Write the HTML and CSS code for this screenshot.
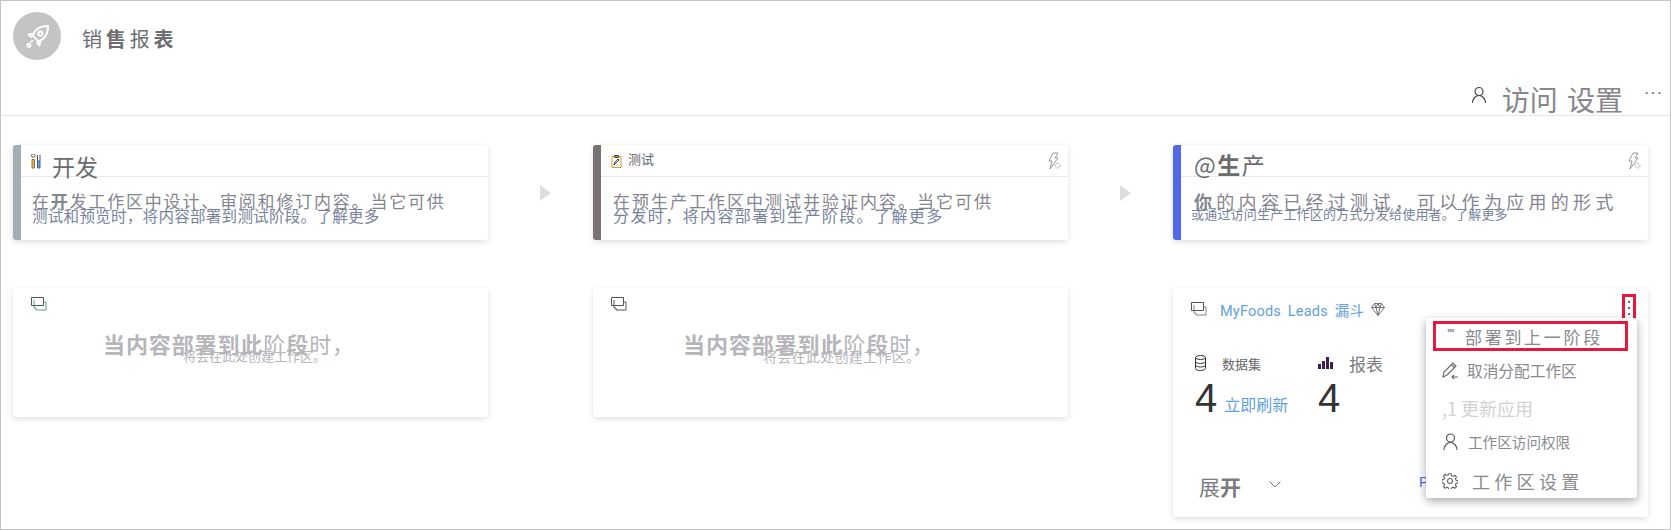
FILE: index.html
```html
<!DOCTYPE html>
<html lang="zh-CN">
<head>
    <meta charset="UTF-8">
    <title>销售报表</title>
    <link rel="stylesheet" href="styles.css">
</head>
<body>
    <div class="frame">
        <header class="top">
            <div class="brand">
                <div class="avatar">
                    <svg width="25" height="25" viewBox="0 0 26 26" fill="none" stroke="#fff" stroke-width="2">
                        <path d="M24 2c-6 0-11 2-14 6l-2 4 6 6 4-2c4-3 6-8 6-14z"/>
                        <circle cx="16" cy="10" r="2.200"/>
                        <path d="M8 10l-4 1 3 3M16 18l-1 4-3-3"/>
                        <circle cx="4" cy="22" r="1.600"/>
                        <path d="M8 17l-2 2"/>
                    </svg>
                </div>
                <h1 class="title">销<b>售</b>报<b>表</b></h1>
            </div>
            <div class="actions">
                <svg class="action-user" width="16" height="18" viewBox="0 0 16 18" fill="none" stroke="#444" stroke-width="1.200">
                    <circle cx="8" cy="5.500" r="4"/>
                    <path d="M1.500 17c0-4 3-7.500 6.500-7.500s6.500 3.500 6.500 7.500"/>
                </svg>
                <span class="action-text">访问 设置</span>
                <span class="action-more">···</span>
            </div>
        </header>

        <main class="pipeline">
            <section class="stage">
                <div class="stage-bar bar-dev"></div>
                <div class="stage-main">
                    <div class="stage-head">
                        <svg class="stage-icon" width="10" height="15" viewBox="0 0 10 15" fill="none" stroke="#555" stroke-width="1">
                            <path d="M1 5.500h2.500V14H1z" fill="#e8b060" stroke="#a07030"/>
                            <path d="M.5 1.500a1.700 1.700 0 1 0 3.500 0 1.700 1.700 0 1 0-3.500 0z"/>
                            <path d="M6.500 7h2.500v7H6.500z" fill="#58a0d8" stroke="#386890"/>
                            <path d="M6.500 1v6M9 1v6"/>
                        </svg>
                        <span class="head-big">开发</span>
                    </div>
                    <div class="stage-body">
                        <p class="line-main"><span class="ls-dev">在<b>开</b>发工作区中设计、审阅和修订内容。当它可供</span></p>
                        <p class="line-sub"><span class="ls-dev2">测试和预览时，将内容部署到测试阶段。了解更多</span></p>
                    </div>
                </div>
            </section>

            <div class="arrow"></div>

            <section class="stage">
                <div class="stage-bar bar-test"></div>
                <div class="stage-main">
                    <div class="stage-head">
                        <svg class="stage-icon" width="11" height="14" viewBox="0 0 11 14" fill="none" stroke="#444" stroke-width="1">
                            <path d="M1 2.500h9v11H1z" stroke="#d99a30"/>
                            <path d="M3.500 1.500h4v2h-4z"/>
                            <path d="M3 11l1-3 3-3 1 1-3 3z"/>
                        </svg>
                        <span class="head-small">测试</span>
                        <svg class="bolt" width="14" height="18" viewBox="0 0 14 18" fill="none" stroke="#999" stroke-width="1">
                            <path d="M6 1h5L8 6h3l-8 11 2-8H2z"/>
                            <circle cx="10.500" cy="13.500" r="2.500" stroke-dasharray="1.500 1"/>
                        </svg>
                    </div>
                    <div class="stage-body body-test">
                        <p class="line-main"><span class="ls-test">在预生产工作区中测试并验证内容。当它可供</span></p>
                        <p class="line-sub"><span class="ls-test2">分发时，将内容部署到生产阶段。了解更多</span></p>
                    </div>
                </div>
            </section>

            <div class="arrow"></div>

            <section class="stage">
                <div class="stage-bar bar-prod"></div>
                <div class="stage-main">
                    <div class="stage-head">
                        <span class="head-big head-at">@<b>生</b>产</span>
                        <svg class="bolt" width="14" height="18" viewBox="0 0 14 18" fill="none" stroke="#999" stroke-width="1">
                            <path d="M6 1h5L8 6h3l-8 11 2-8H2z"/>
                            <circle cx="10.500" cy="13.500" r="2.500" stroke-dasharray="1.500 1"/>
                        </svg>
                    </div>
                    <div class="stage-body body-prod">
                        <p class="line-main"><span class="ls-prod"><b>你</b>的内容已经过测试，可以作为应用的形式</span></p>
                        <p class="line-sub"><span class="ls-prod2">或通过访问生产工作区的方式分发给使用者。了解更多</span></p>
                    </div>
                </div>
            </section>

            <section class="empty col-one">
                <svg class="stack" width="16" height="14" viewBox="0 0 16 14" fill="none" stroke="#555" stroke-width="1">
                    <path d="M3 3v8h2v2h10V5h-2" stroke="#6a9a78"/>
                    <path d="M.5.500h12v8H.5z"/>
                </svg>
                <p class="empty-main"><b>当内容部署到此</b>阶<b>段</b>时，</p>
                <p class="empty-sub">将会在此处创建工作区。</p>
            </section>

            <section class="empty col-two">
                <svg class="stack" width="16" height="14" viewBox="0 0 16 14" fill="none" stroke="#555" stroke-width="1">
                    <path d="M3 3v8h2v2h10V5h-2"/>
                    <path d="M.5.500h12v8H.5z"/>
                </svg>
                <p class="empty-main"><b>当内容部署到此</b>阶<b>段</b>时，</p>
                <p class="empty-sub sub-two">将会在此处创建工作区。</p>
            </section>

            <section class="workspace col-three">
                <div class="ws-head">
                    <svg width="16" height="14" viewBox="0 0 16 14" fill="none" stroke="#555" stroke-width="1">
                        <path d="M3 3v8h2v2h10V5h-2" stroke="#8a7aa0"/>
                        <path d="M.5.500h12v8H.5z"/>
                    </svg>
                    <a class="ws-name">MyFoods Leads 漏斗</a>
                    <svg width="14" height="13" viewBox="0 0 14 13" fill="none" stroke="#777" stroke-width="1">
                        <path d="M3.500.500h7l3 4L7 12.500.5 4.500zM.5 4.500h13M5 4.500l2 8 2-8M3.500.500L5 4.500 7 .5l2 4 1.500-4"/>
                    </svg>
                    <div class="kebab"><i></i><i></i><i></i></div>
                </div>

                <div class="ws-stats">
                    <div class="stat-data">
                        <div class="stat-label">
                            <svg width="11" height="16" viewBox="0 0 11 16" fill="none" stroke="#333" stroke-width="1">
                                <ellipse cx="5.500" cy="2.500" rx="5" ry="2"/>
                                <path d="M.5 2.500v11c0 1 2 2 5 2s5-1 5-2v-11M.5 6.500c0 1 2 2 5 2s5-1 5-2M.5 10c0 1 2 2 5 2s5-1 5-2"/>
                            </svg>
                            <span class="label-small">数据集</span>
                        </div>
                        <div class="stat-value"><span class="num">4</span><a class="refresh">立即刷新</a></div>
                    </div>
                    <div>
                        <div class="stat-label">
                            <svg width="15" height="12" viewBox="0 0 15 12" fill="#3a2050">
                                <path d="M0 7h3v5H0zM4 4h3v8H4zM8 0h3v12H8zM12 5h3v7h-3z"/>
                            </svg>
                            <span class="label-big">报表</span>
                        </div>
                        <div class="stat-value"><span class="num">4</span></div>
                    </div>
                </div>

                <div class="ws-foot">
                    <span class="expand">展<b>开</b></span>
                    <svg width="12" height="7" viewBox="0 0 12 7" fill="none" stroke="#777" stroke-width="1"><path d="M.5.500L6 6l5.500-5.500"/></svg>
                    <span class="foot-link">P</span>
                </div>

                <div class="menu">
                    <div class="menu-item item-hit"><span class="hit-mark">''''</span><span class="hit-text">部署到上一阶段</span></div>
                    <div class="menu-item item-unassign">
                        <svg width="17" height="18" viewBox="0 0 17 18" fill="none" stroke="#666" stroke-width="1.100">
                            <path d="M1 16l1-5L11 2l3 3-9 9zM9.500 3.500l3 3"/>
                            <path d="M16 16h-6m2-2l-2 2 2 2"/>
                        </svg>
                        <span>取消分配工作区</span>
                    </div>
                    <div class="menu-item item-off">,1 更新应用</div>
                    <div class="menu-item item-access">
                        <svg width="15" height="17" viewBox="0 0 15 17" fill="none" stroke="#555" stroke-width="1.200">
                            <circle cx="7.500" cy="5" r="4"/>
                            <path d="M1 17c0-4 3-7.500 6.500-7.500S14 13 14 17"/>
                        </svg>
                        <span>工作区访问权限</span>
                    </div>
                    <div class="menu-item item-settings">
                        <svg width="16" height="16" viewBox="0 0 16 16" fill="none" stroke="#666" stroke-width="1.100">
                            <circle cx="8" cy="8" r="2.500"/>
                            <path d="M6.800.8h2.400l.4 2 1.500.6 1.700-1.100 1.700 1.700-1.100 1.700.6 1.500 2 .4v2.400l-2 .4-.6 1.500 1.100 1.700-1.700 1.700-1.700-1.100-1.500.6-.4 2H6.800l-.4-2-1.500-.6-1.700 1.100-1.700-1.700 1.100-1.700-.6-1.500-2-.4V6.600l2-.4.6-1.500L1.500 3l1.700-1.700 1.700 1.100 1.500-.6z"/>
                        </svg>
                        <span>工作区设置</span>
                    </div>
                </div>
            </section>
        </main>
    </div>
</body>
</html>
```

FILE: styles.css
```css
* { box-sizing: border-box; }
body {
    margin: 0;
    background: white;
    font-family: "Noto Sans CJK SC", "Liberation Sans", sans-serif;
    color: #77777c;
}
p, h1 { margin: 0; font-weight: normal; }
b { font-weight: bold; }
.frame {
    width: 1671px;
    height: 530px;
    overflow: hidden;
    border: 1px solid #c4c4c4;
}

/* header */
.top {
    height: 115px;
    border-bottom: 1px solid #e6e6e6;
    padding: 11px 7px 0 12px;
    display: flex;
    justify-content: space-between;
}
.brand { display: flex; align-items: flex-start; gap: 21px; }
.avatar {
    width: 48px;
    height: 48px;
    border-radius: 50%;
    background: #c4c4c4;
    display: flex;
    align-items: center;
    justify-content: center;
}
.title {
    font-size: 20px;
    letter-spacing: 3.800px;
    line-height: 28px;
    margin-top: 13px;
    color: #6e6e72;
}
.actions {
    display: flex;
    align-items: center;
    align-self: flex-end;
    height: 28px;
    margin-bottom: 2px;
}
.action-user { margin-top: -8px; }
.action-text {
    font-size: 28px;
    line-height: 28px;
    margin-left: 15px;
    word-spacing: 3px;
    color: #86868b;
}
.action-more {
    font-size: 16px;
    font-family: "Liberation Sans", sans-serif;
    margin-left: 21px;
    margin-top: -12px;
    color: #4a5a80;
    letter-spacing: 1px;
}

/* stages */
.pipeline {
    display: grid;
    grid-template-columns: 475px 105px 475px 105px 475px;
    grid-template-rows: 95px auto;
    row-gap: 48px;
    padding: 29px 0 0 12px;
    align-items: start;
}
.stage, .empty, .workspace {
    background: white;
    border-radius: 3px;
    box-shadow: 0 2px 6px rgba(0,0,0,0.13);
}
.stage { display: flex; height: 95px; overflow: hidden; }
.stage-bar { width: 8px; flex: none; }
.bar-dev { background: #a0b0b2; }
.bar-test { background: #7a7272; }
.bar-prod { background: #5068e8; }
.stage-main { flex: 1; }
.stage-head {
    height: 32px;
    border-bottom: 1px solid #e8e8e8;
    display: flex;
    align-items: flex-start;
    padding-left: 10px;
}
.stage-icon { margin-top: 9px; }
.head-big {
    font-size: 23px;
    line-height: 42px;
    margin-left: 11px;
    color: #6c6c70;
}
.head-at { margin-left: 3px; letter-spacing: 1.500px; line-height: 38px; }
.head-small {
    font-size: 13px;
    line-height: 28px;
    margin-left: 6px;
    color: #66666a;
}
.bolt { margin-left: auto; margin-right: 7px; margin-top: 7px; }
.stage-body { padding: 14px 0 0 11px; }
.line-main, .line-sub { white-space: nowrap; }
.line-main { font-size: 17px; line-height: 20px; color: #85858f; }
.line-sub { font-size: 15.500px; line-height: 16px; color: #78829c; margin-top: -4px; }
.ls-dev { letter-spacing: 1.800px; }
.ls-dev2 { letter-spacing: 0.300px; }
.body-test { padding-left: 12px; }
.ls-test { letter-spacing: 2px; }
.ls-test2 { font-size: 16px; letter-spacing: 1.400px; }
.body-prod { padding: 14px 0 0 13px; }
.body-prod .line-sub { margin-top: -8px; }
.ls-prod { font-size: 18px; letter-spacing: 4.300px; }
.ls-prod2 { font-size: 13px; letter-spacing: 0.200px; margin-left: -3px; display: inline-block; }
.arrow {
    width: 0;
    height: 0;
    margin: 40px 0 0 52px;
    border-left: 11px solid #dedede;
    border-top: 8px solid transparent;
    border-bottom: 8px solid transparent;
}

/* empty cards */
.col-one { grid-column: 1; grid-row: 2; }
.col-two { grid-column: 3; grid-row: 2; }
.col-three { grid-column: 5; grid-row: 2; }
.empty { height: 129px; padding: 9px 0 0 18px; }
.stack { display: block; }
.empty-main {
    font-size: 22px;
    letter-spacing: 0.900px;
    line-height: 26px;
    margin: 19px 0 0 72px;
    color: #b6b6ba;
    white-space: nowrap;
}
.empty-sub {
    font-size: 13px;
    line-height: 16px;
    margin: -8px 0 0 152px;
    color: #b6b6ba;
    white-space: nowrap;
}
.sub-two { font-size: 14px; letter-spacing: 0.300px; }

/* workspace card */
.workspace {
    height: 229px;
    position: relative;
    padding: 14px 0 0 18px;
}
.ws-head { display: flex; align-items: center; height: 14px; }
.ws-name {
    font-family: "Roboto", "Noto Sans CJK SC", sans-serif;
    font-size: 14.500px;
    letter-spacing: 0.200px;
    word-spacing: 3px;
    margin: 0 7px 0 13px;
    color: #62a0e0;
}
.kebab {
    position: absolute;
    top: 6px;
    left: 449px;
    width: 14px;
    height: 28px;
    border: 3px solid #e8173c;
    display: flex;
    flex-direction: column;
    align-items: center;
    justify-content: center;
    gap: 4px;
}
.kebab i { width: 2px; height: 2px; background: #667; display: block; }
.ws-stats { display: flex; margin-top: 37px; padding-left: 4px; }
.stat-data { width: 123px; }
.stat-label { display: flex; align-items: center; height: 20px; }
.label-small { font-size: 13px; margin-left: 16px; color: #66666a; }
.label-big { font-size: 17px; margin-left: 16px; color: #7c7c80; line-height: 20px; margin-top: 1px; }
.stat-value { display: flex; align-items: flex-end; height: 40px; margin-top: 5px; }
.num {
    font-family: "Liberation Sans", sans-serif;
    font-size: 40px;
    line-height: 40px;
    color: #333;
}
.refresh { font-size: 16px; line-height: 24px; margin: 0 0 2px 7px; color: #62a0e0; }
.ws-foot { display: flex; align-items: center; margin-top: 52px; padding-left: 8px; height: 32px; }
.expand { font-size: 21px; color: #7c7c80; }
.ws-foot svg { margin-left: 28px; margin-top: -4px; }
.foot-link {
    position: absolute;
    left: 246px;
    bottom: 27px;
    font-family: "Liberation Sans", sans-serif;
    font-size: 14px;
    color: #4a70d8;
}

/* menu over the workspace card */
.menu {
    position: absolute;
    top: 30px;
    left: 253px;
    width: 211px;
    height: 180px;
    background: white;
    border-radius: 3px;
    box-shadow: 0 3px 10px rgba(0,0,0,0.35);
    padding-top: 3px;
}
.menu-item { display: flex; align-items: center; white-space: nowrap; color: #8a8a8e; }
.item-hit {
    width: 195px;
    height: 30px;
    margin-left: 7px;
    border: 3px solid #e8173c;
    padding-left: 11px;
}
.hit-mark { font-size: 14px; width: 18px; font-family: "Liberation Sans", sans-serif; letter-spacing: -1px; margin-top: -4px; }
.hit-text { font-size: 17px; letter-spacing: 2.700px; }
.item-unassign { height: 36px; margin-top: 1px; padding-left: 16px; font-size: 15.700px; gap: 8px; }
.item-off { height: 36px; margin-top: 2px; padding-left: 16px; font-size: 18px; color: #d2d2d2; }
.item-access { height: 36px; margin-top: -3px; padding-left: 17px; font-size: 14.600px; gap: 10px; }
.item-settings { height: 36px; margin-top: 4px; padding-left: 16px; font-size: 18px; letter-spacing: 4.300px; gap: 14px; }
```
